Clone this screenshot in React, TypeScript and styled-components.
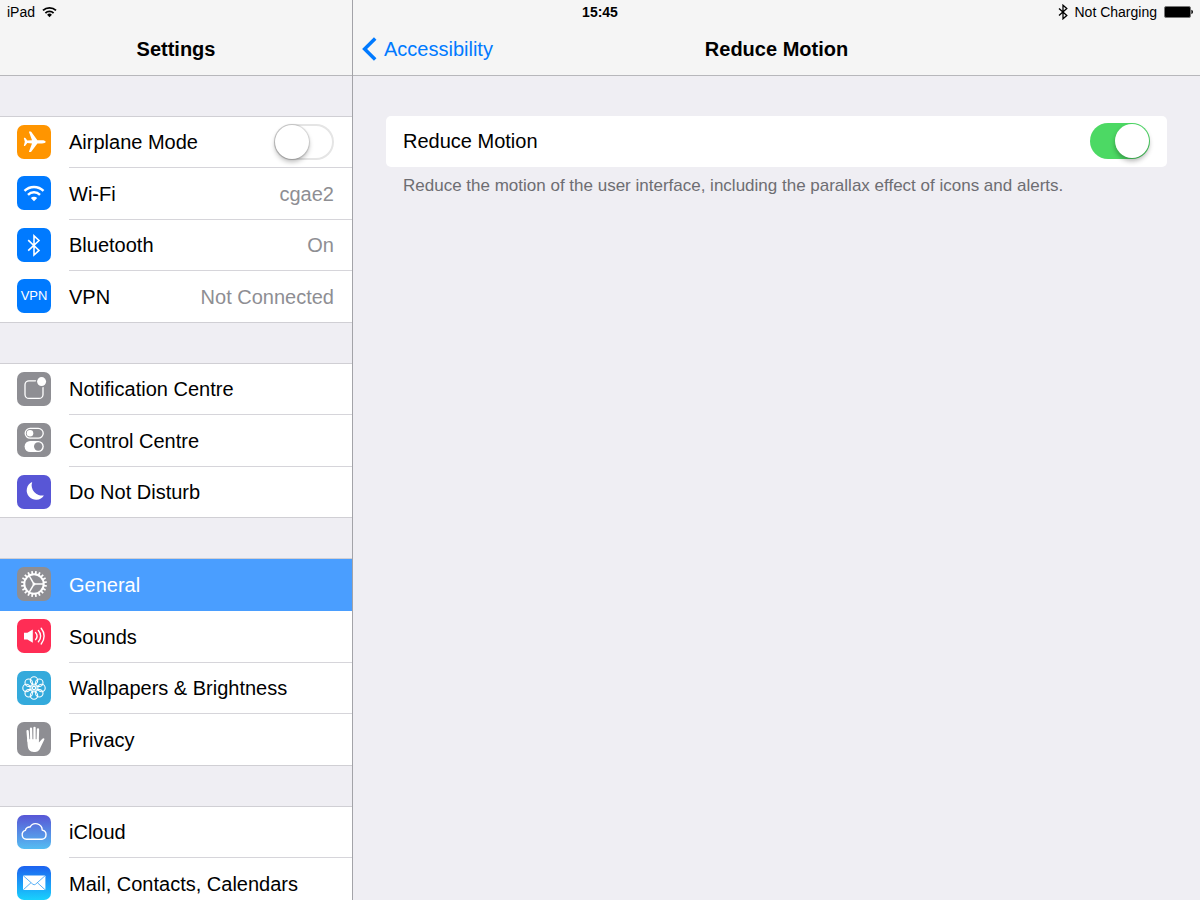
import React, { useState } from "react";
import styled, { createGlobalStyle, css } from "styled-components";

const GlobalStyle = createGlobalStyle`
  *, *::before, *::after { box-sizing: border-box; }
  html, body { margin: 0; }
  body {
    background: #efeef3;
    color: #000;
    font-family: "Liberation Sans", Arial, sans-serif;
    font-size: 20px;
    line-height: 24px;
  }
`;

const Screen = styled.div`
  position: relative;
  display: flex;
  height: 100vh;
  overflow: hidden;
`;

const StatusBar = styled.div`
  position: absolute;
  z-index: 2;
  inset: 0 0 auto 0;
  display: grid;
  grid-template-columns: 1fr auto 1fr;
  align-items: center;
  height: 24px;
  padding: 0 7px;
  font-size: 14px;
  line-height: 24px;
`;

const StatusSide = styled.div<{ $end?: boolean }>`
  display: flex;
  align-items: center;
  justify-content: ${(p) => (p.$end ? "flex-end" : "flex-start")};
  gap: 7px;
`;

const Clock = styled.time`
  font-weight: bold;
`;

const Sidebar = styled.nav`
  flex: none;
  display: flex;
  flex-direction: column;
  width: 353px;
  border-right: 1px solid #a3a3a8;
`;

const Detail = styled.main`
  flex: 1;
  min-width: 0;
`;

const Header = styled.header`
  flex: none;
  display: grid;
  grid-template-columns: 1fr auto 1fr;
  align-items: center;
  height: 76px;
  padding: 22px 9px 0;
  border-bottom: 1px solid #b7b7bb;
  background: #f5f5f5;
`;

const Title = styled.h1`
  grid-column: 2;
  margin: 0;
  font-size: 20px;
  line-height: 24px;
  font-weight: bold;
`;

const BackLink = styled.a`
  display: flex;
  align-items: center;
  gap: 7px;
  color: #007aff;
  text-decoration: none;
`;

const Groups = styled.div`
  flex: 1;
  min-height: 0;
  display: flex;
  flex-direction: column;
  gap: 40px;
  padding: 40px 0;
  overflow-y: auto;
  scrollbar-width: none;
`;

const Group = styled.ul`
  flex: none;
  margin: 0;
  padding: 0;
  list-style: none;
  border-top: 1px solid #d0cfd4;
  background: #fff;
`;

const Item = styled.li<{ $selected?: boolean }>`
  display: flex;
  height: 51px;
  padding-left: 17px;
  &:nth-child(even) { height: 52px; }
  &:last-child { border-bottom: 1px solid #d0cfd4; }
  ${(p) =>
    p.$selected &&
    css`
      height: 52px;
      background: #4a9eff;
      color: #fff;
    `}
`;

const rowLayout = css`
  flex: 1;
  display: flex;
  gap: 18px;
  min-width: 0;
  color: inherit;
  text-decoration: none;
`;

const RowLink = styled.a`
  ${rowLayout}
`;

const RowLabel = styled.label`
  ${rowLayout}
`;

const RowBody = styled.span<{ $line: boolean }>`
  flex: 1;
  display: flex;
  align-items: center;
  justify-content: space-between;
  padding-right: 18px;
  white-space: nowrap;
  border-bottom: ${(p) => (p.$line ? "1px solid #d6d5da" : "0")};
`;

const Value = styled.span`
  color: #8e8e93;
`;

const Tile = styled.span<{ $fill: string }>`
  flex: none;
  display: flex;
  align-items: center;
  justify-content: center;
  width: 34px;
  height: 34px;
  margin-top: 8px;
  border-radius: 7px;
  background: ${(p) => p.$fill};
  color: #fff;
  font-size: 13px;
  line-height: 16px;
`;

const Switch = styled.input`
  appearance: none;
  flex: none;
  display: flex;
  align-items: center;
  width: 60px;
  height: 36px;
  margin: 0;
  padding: 0 1px;
  border-radius: 18px;
  background: #fff;
  box-shadow: inset 0 0 0 2px #e5e5e5;
  &::before {
    content: "";
    width: 34px;
    height: 34px;
    border-radius: 50%;
    background: #fff;
    box-shadow: 0 0 1px 1px rgba(0, 0, 0, 0.14), 0 3px 5px rgba(0, 0, 0, 0.26);
  }
  &:checked {
    justify-content: flex-end;
    background: #4cd964;
    box-shadow: none;
  }
  &:checked::before {
    box-shadow: 0 3px 5px rgba(0, 0, 0, 0.3);
  }
`;

const Content = styled.section`
  padding: 40px 33px;
`;

const Card = styled.label`
  display: flex;
  align-items: center;
  justify-content: space-between;
  height: 51px;
  padding: 0 17px 1px;
  border-radius: 5px;
  background: #fff;
`;

const Footnote = styled.p`
  margin: 8px 17px;
  color: #6d6d72;
  font-size: 17px;
  line-height: 22px;
`;

const Glyph = ({ children }: { children: React.ReactNode }) => (
  <svg width="34" height="34" viewBox="0 0 34 34" fill="none" stroke="none" aria-hidden="true">
    {children}
  </svg>
);

const polar = (r: number, deg: number): [number, number] => [
  17 + r * Math.cos((deg * Math.PI) / 180),
  17 + r * Math.sin((deg * Math.PI) / 180),
];

const icons = {
  airplane: (
    <Glyph>
      <path
        fill="#fff"
        d="M28.7 16.8C28.7 15.7 27 15.2 25 15.2H20.4L14.2 6.8Q14 6.5 13.6 6.5H12.4Q11.8 6.5 12 7.1L15 15.2 10.3 15.5 8.4 13Q8.2 12.7 7.8 12.7H7.3Q6.8 12.7 6.9 13.2L7.8 16.8 6.9 20.4Q6.8 20.9 7.3 20.9H7.8Q8.2 20.9 8.4 20.6L10.3 18.1 15 18.4 12 26.5Q11.8 27.1 12.4 27.1H13.6Q14 27.1 14.2 26.8L20.4 18.4H25C27 18.4 28.7 17.9 28.7 16.8Z"
      />
    </Glyph>
  ),
  wifi: (
    <Glyph>
      <g stroke="#fff" strokeWidth="2.4">
        <path d="M7.5 14.9A13.4 13.4 0 0 1 26.5 14.9" />
        <path d="M11 18.8A8.5 8.5 0 0 1 23 18.8" />
      </g>
      <path fill="#fff" d="M17 25.2L13.8 22A4.5 4.5 0 0 1 20.2 22Z" />
    </Glyph>
  ),
  bluetooth: (
    <Glyph>
      <path stroke="#fff" strokeWidth="1.6" d="M11.2 12.2L22 22.4 17 27V7.8L22 12.5 11.2 22.7" />
    </Glyph>
  ),
  notifications: (
    <Glyph>
      <rect x="8" y="8.8" width="18" height="17.6" rx="4" stroke="#fff" strokeWidth="1.3" />
      <circle cx="24.6" cy="9.6" r="5.8" fill="#8e8e93" />
      <circle cx="24.6" cy="9.6" r="4.5" fill="#fff" />
    </Glyph>
  ),
  control: (
    <Glyph>
      <rect x="8.2" y="5.4" width="18" height="9.8" rx="4.9" stroke="#fff" strokeWidth="1.3" />
      <circle cx="13" cy="10.2" r="3.3" fill="#fff" />
      <rect x="7.6" y="18" width="19.2" height="11" rx="5.5" fill="#fff" />
      <circle cx="21.2" cy="23.5" r="4.2" fill="#8e8e93" />
    </Glyph>
  ),
  moon: (
    <Glyph>
      <path fill="#fff" d="M15.2 7A9.3 9.3 0 1 0 26.9 20.4A10.3 10.3 0 0 1 15.2 7Z" />
    </Glyph>
  ),
  gear: (
    <Glyph>
      <g stroke="#fff">
        <circle cx="17" cy="17" r="9.7" strokeWidth="2" />
        {Array.from({ length: 20 }, (_, i) => {
          const [x1, y1] = polar(10, i * 18 + 9);
          const [x2, y2] = polar(13, i * 18 + 9);
          return <line key={i} x1={x1} y1={y1} x2={x2} y2={y2} strokeWidth="1.7" />;
        })}
        {[0, 120, 240].map((deg) => {
          const [x, y] = polar(9.5, deg);
          return <line key={deg} x1="17" y1="17" x2={x} y2={y} strokeWidth="1.5" />;
        })}
        <circle cx="17" cy="17" r="1.5" fill="#fff" stroke="none" />
      </g>
    </Glyph>
  ),
  sounds: (
    <Glyph>
      <path fill="#fff" d="M7 13.8H10.4L15.8 10.4V23.8L10.4 20.4H7Z" />
      <g stroke="#fff" strokeWidth="1.4" strokeLinecap="round">
        <path d="M18.6 13.6A5.4 5.4 0 0 1 18.6 20.6" />
        <path d="M21.4 11.4A8.4 8.4 0 0 1 21.4 22.8" />
        <path d="M24.2 9.2A12.2 12.2 0 0 1 24.2 25" />
      </g>
    </Glyph>
  ),
  flower: (
    <Glyph>
      <g stroke="#fff" strokeWidth="1.1">
        {Array.from({ length: 8 }, (_, i) => {
          const [cx, cy] = polar(7.5, i * 45);
          const [x1, y1] = polar(1.8, i * 45 + 22.5);
          const [x2, y2] = polar(5, i * 45 + 22.5);
          return (
            <g key={i}>
              <circle cx={cx} cy={cy} r="3.7" />
              <line x1={x1} y1={y1} x2={x2} y2={y2} />
            </g>
          );
        })}
        <circle cx="17" cy="17" r="1.6" />
      </g>
    </Glyph>
  ),
  hand: (
    <Glyph>
      <g stroke="#fff" strokeWidth="2.3" strokeLinecap="round">
        <path d="M10.6 9.2L11.4 19" />
        <path d="M14 6.6L14.3 18" />
        <path d="M17.5 5.8V18" />
        <path d="M21 7.4L20.7 18" />
      </g>
      <path
        fill="#fff"
        d="M10.2 17.2H21.9V20.6L25.1 17Q26.2 15.9 27.2 16.4 27.8 16.9 27 18.2L23.6 25.2C22.3 28.6 20.6 30 17 30C12.4 30 10.9 27.4 10.6 22.6Z"
      />
    </Glyph>
  ),
  cloud: (
    <Glyph>
      <path
        stroke="#fff"
        strokeWidth="1.4"
        strokeLinejoin="round"
        d="M9.4 24.2A4.5 4.5 0 0 1 8.4 15.4A3.9 3.9 0 0 1 13 12.1A6.5 6.5 0 0 1 25.2 15.1A4.6 4.6 0 0 1 25 24.2Z"
      />
    </Glyph>
  ),
  mail: (
    <Glyph>
      <rect x="6" y="9.4" width="22.4" height="14.6" rx="0.8" fill="#fff" />
      <path
        stroke="#2f9df5"
        strokeWidth="0.8"
        d="M6.4 9.8L15.8 18.2Q17.2 19.3 18.6 18.2L28 9.8M6.4 23.7L14 16.7M28 23.7L20.4 16.7"
      />
    </Glyph>
  ),
  vpn: "VPN",
};

type Row = {
  label: string;
  icon: keyof typeof icons;
  fill: string;
  value?: string;
  toggle?: boolean;
  selected?: boolean;
};

const BLUE = "#007aff";
const GREY = "#8e8e93";

const groups: Row[][] = [
  [
    { label: "Airplane Mode", icon: "airplane", fill: "#ff9500", toggle: true },
    { label: "Wi-Fi", icon: "wifi", fill: BLUE, value: "cgae2" },
    { label: "Bluetooth", icon: "bluetooth", fill: BLUE, value: "On" },
    { label: "VPN", icon: "vpn", fill: BLUE, value: "Not Connected" },
  ],
  [
    { label: "Notification Centre", icon: "notifications", fill: GREY },
    { label: "Control Centre", icon: "control", fill: GREY },
    { label: "Do Not Disturb", icon: "moon", fill: "#5856d6" },
  ],
  [
    { label: "General", icon: "gear", fill: GREY, selected: true },
    { label: "Sounds", icon: "sounds", fill: "#ff2d55" },
    { label: "Wallpapers & Brightness", icon: "flower", fill: "#34aadc" },
    { label: "Privacy", icon: "hand", fill: GREY },
  ],
  [
    { label: "iCloud", icon: "cloud", fill: "linear-gradient(#5856d6, #55bdf2)" },
    { label: "Mail, Contacts, Calendars", icon: "mail", fill: "linear-gradient(#1d62f0, #19d1fd)" },
  ],
];

export default function App() {
  const [airplane, setAirplane] = useState(false);
  const [reduce, setReduce] = useState(true);

  return (
    <>
      <GlobalStyle />
      <Screen>
        <StatusBar>
          <StatusSide>
            <span>iPad</span>
            <svg width="15" height="12" viewBox="0 0 15 12" fill="none" aria-label="Wi-Fi">
              <path d="M1 4.4A9.4 9.4 0 0 1 14 4.4" stroke="#000" strokeWidth="1.8" />
              <path d="M3.4 7.1A5.8 5.8 0 0 1 11.6 7.1" stroke="#000" strokeWidth="1.8" />
              <path d="M7.5 11.2L5.1 8.8A3.4 3.4 0 0 1 9.9 8.8Z" fill="#000" />
            </svg>
          </StatusSide>
          <Clock>15:45</Clock>
          <StatusSide $end>
            <svg width="10" height="16" viewBox="0 0 10 16" fill="none" aria-label="Bluetooth">
              <path d="M1 4.5L8.8 11.5 5 14.8V1.2L8.8 4.5 1 11.5" stroke="#000" strokeWidth="1.3" />
            </svg>
            <span>Not Charging</span>
            <svg width="29" height="12" viewBox="0 0 29 12" aria-label="Battery full">
              <rect x="0.5" y="0.5" width="26" height="11" rx="1.5" fill="#000" stroke="#777" />
              <path d="M27.4 3.8Q29 4.4 29 6T27.4 8.2Z" fill="#000" />
            </svg>
          </StatusSide>
        </StatusBar>

        <Sidebar>
          <Header>
            <Title>Settings</Title>
          </Header>
          <Groups>
            {groups.map((rows, g) => (
              <Group key={g}>
                {rows.map((row, i) => {
                  const content = (
                    <>
                      <Tile $fill={row.fill}>{icons[row.icon]}</Tile>
                      <RowBody $line={i < rows.length - 1 && !row.selected}>
                        <span>{row.label}</span>
                        {row.value && <Value>{row.value}</Value>}
                        {row.toggle && (
                          <Switch
                            type="checkbox"
                            role="switch"
                            checked={airplane}
                            onChange={(e) => setAirplane(e.target.checked)}
                          />
                        )}
                      </RowBody>
                    </>
                  );
                  return (
                    <Item key={row.label} $selected={row.selected}>
                      {row.toggle ? <RowLabel>{content}</RowLabel> : <RowLink href="#">{content}</RowLink>}
                    </Item>
                  );
                })}
              </Group>
            ))}
          </Groups>
        </Sidebar>

        <Detail>
          <Header>
            <BackLink href="#">
              <svg width="15" height="24" viewBox="0 0 15 24" fill="none" aria-hidden="true">
                <path d="M13.2 1.4L2.6 12 13.2 22.6" stroke="#007aff" strokeWidth="3.5" />
              </svg>
              Accessibility
            </BackLink>
            <Title>Reduce Motion</Title>
          </Header>
          <Content>
            <Card>
              Reduce Motion
              <Switch
                type="checkbox"
                role="switch"
                checked={reduce}
                onChange={(e) => setReduce(e.target.checked)}
              />
            </Card>
            <Footnote>
              Reduce the motion of the user interface, including the parallax effect of icons and alerts.
            </Footnote>
          </Content>
        </Detail>
      </Screen>
    </>
  );
}
